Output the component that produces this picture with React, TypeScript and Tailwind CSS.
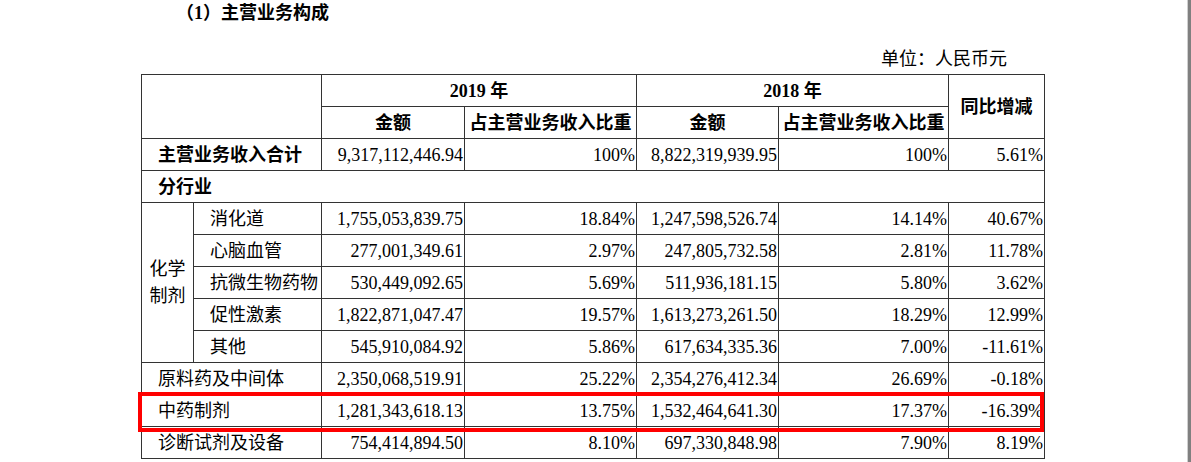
const font = { fontFamily: '"Liberation Serif", "Noto Sans CJK SC", serif' };

type Row = { label: string; a19: string; p19: string; a18: string; p18: string; yoy: string };

const chem: Row[] = [
  { label: '消化道', a19: '1,755,053,839.75', p19: '18.84%', a18: '1,247,598,526.74', p18: '14.14%', yoy: '40.67%' },
  { label: '心脑血管', a19: '277,001,349.61', p19: '2.97%', a18: '247,805,732.58', p18: '2.81%', yoy: '11.78%' },
  { label: '抗微生物药物', a19: '530,449,092.65', p19: '5.69%', a18: '511,936,181.15', p18: '5.80%', yoy: '3.62%' },
  { label: '促性激素', a19: '1,822,871,047.47', p19: '19.57%', a18: '1,613,273,261.50', p18: '18.29%', yoy: '12.99%' },
  { label: '其他', a19: '545,910,084.92', p19: '5.86%', a18: '617,634,335.36', p18: '7.00%', yoy: '-11.61%' },
];

const others: Row[] = [
  { label: '原料药及中间体', a19: '2,350,068,519.91', p19: '25.22%', a18: '2,354,276,412.34', p18: '26.69%', yoy: '-0.18%' },
  { label: '中药制剂', a19: '1,281,343,618.13', p19: '13.75%', a18: '1,532,464,641.30', p18: '17.37%', yoy: '-16.39%' },
  { label: '诊断试剂及设备', a19: '754,414,894.50', p19: '8.10%', a18: '697,330,848.98', p18: '7.90%', yoy: '8.19%' },
];

const cell = 'border border-[#333] p-0 align-middle';
const num = `${cell} text-right pr-[1px] whitespace-nowrap`;

function Nums({ r }: { r: Row }) {
  return (
    <>
      <td className={num}>{r.a19}</td>
      <td className={num}>{r.p19}</td>
      <td className={num}>{r.a18}</td>
      <td className={num}>{r.p18}</td>
      <td className={num}>{r.yoy}</td>
    </>
  );
}

export default function App() {
  return (
    <div className="flex w-[1191px] h-[462px] bg-white text-black overflow-hidden" style={font}>
      <div className="flex-1 flex flex-col">
        <div className="pl-[176px] text-[18px] leading-[26px] font-bold">（1）主营业务构成</div>
        <div className="w-[1044px] mt-[20px] flex justify-end pr-[37px] text-[18px] leading-[26px]">单位：人民币元</div>

        <div className="relative ml-[141px] mt-[2px] w-[903px]">
          <table className="table-fixed border-collapse w-[903px] text-[18px] leading-[26px]">
            <colgroup>
              <col className="w-[52px]" />
              <col className="w-[128px]" />
              <col className="w-[143px]" />
              <col className="w-[172px]" />
              <col className="w-[142px]" />
              <col className="w-[170px]" />
              <col className="w-[96px]" />
            </colgroup>
            <tbody>
              <tr className="h-[32px]">
                <td className={cell} colSpan={2} rowSpan={2}></td>
                <td className={`${cell} text-center font-bold`} colSpan={2}>2019 年</td>
                <td className={`${cell} text-center font-bold`} colSpan={2}>2018 年</td>
                <td className={`${cell} text-center font-bold`} rowSpan={2}>同比增减</td>
              </tr>
              <tr className="h-[32px]">
                <td className={`${cell} text-center font-bold`}>金额</td>
                <td className={`${cell} text-center font-bold whitespace-nowrap`}>占主营业务收入比重</td>
                <td className={`${cell} text-center font-bold`}>金额</td>
                <td className={`${cell} text-center font-bold whitespace-nowrap`}>占主营业务收入比重</td>
              </tr>
              <tr className="h-[32px]">
                <td className={`${cell} pl-[16px] font-bold whitespace-nowrap`} colSpan={2}>主营业务收入合计</td>
                <td className={num}>9,317,112,446.94</td>
                <td className={num}>100%</td>
                <td className={num}>8,822,319,939.95</td>
                <td className={num}>100%</td>
                <td className={num}>5.61%</td>
              </tr>
              <tr className="h-[32px]">
                <td className={`${cell} pl-[16px] font-bold`} colSpan={7}>分行业</td>
              </tr>
              {chem.map((r, i) => (
                <tr key={r.label} className="h-[32px]">
                  {i === 0 && (
                    <td className={`${cell} text-center leading-[27px]`} rowSpan={5}>
                      化学<br />制剂
                    </td>
                  )}
                  <td className={`${cell} pl-[16px] whitespace-nowrap`}>{r.label}</td>
                  <Nums r={r} />
                </tr>
              ))}
              {others.map((r) => (
                <tr key={r.label} className="h-[32px]">
                  <td className={`${cell} pl-[16px] whitespace-nowrap`} colSpan={2}>{r.label}</td>
                  <Nums r={r} />
                </tr>
              ))}
            </tbody>
          </table>
          <div className="absolute left-[-3px] top-[318px] w-[906px] h-[40px] border-[4px] border-[#ff0000]" />
        </div>
      </div>
      <div className="w-[1px] bg-[#d0d0d0]" />
      <div className="w-[3px] bg-[#808080]" />
    </div>
  );
}
